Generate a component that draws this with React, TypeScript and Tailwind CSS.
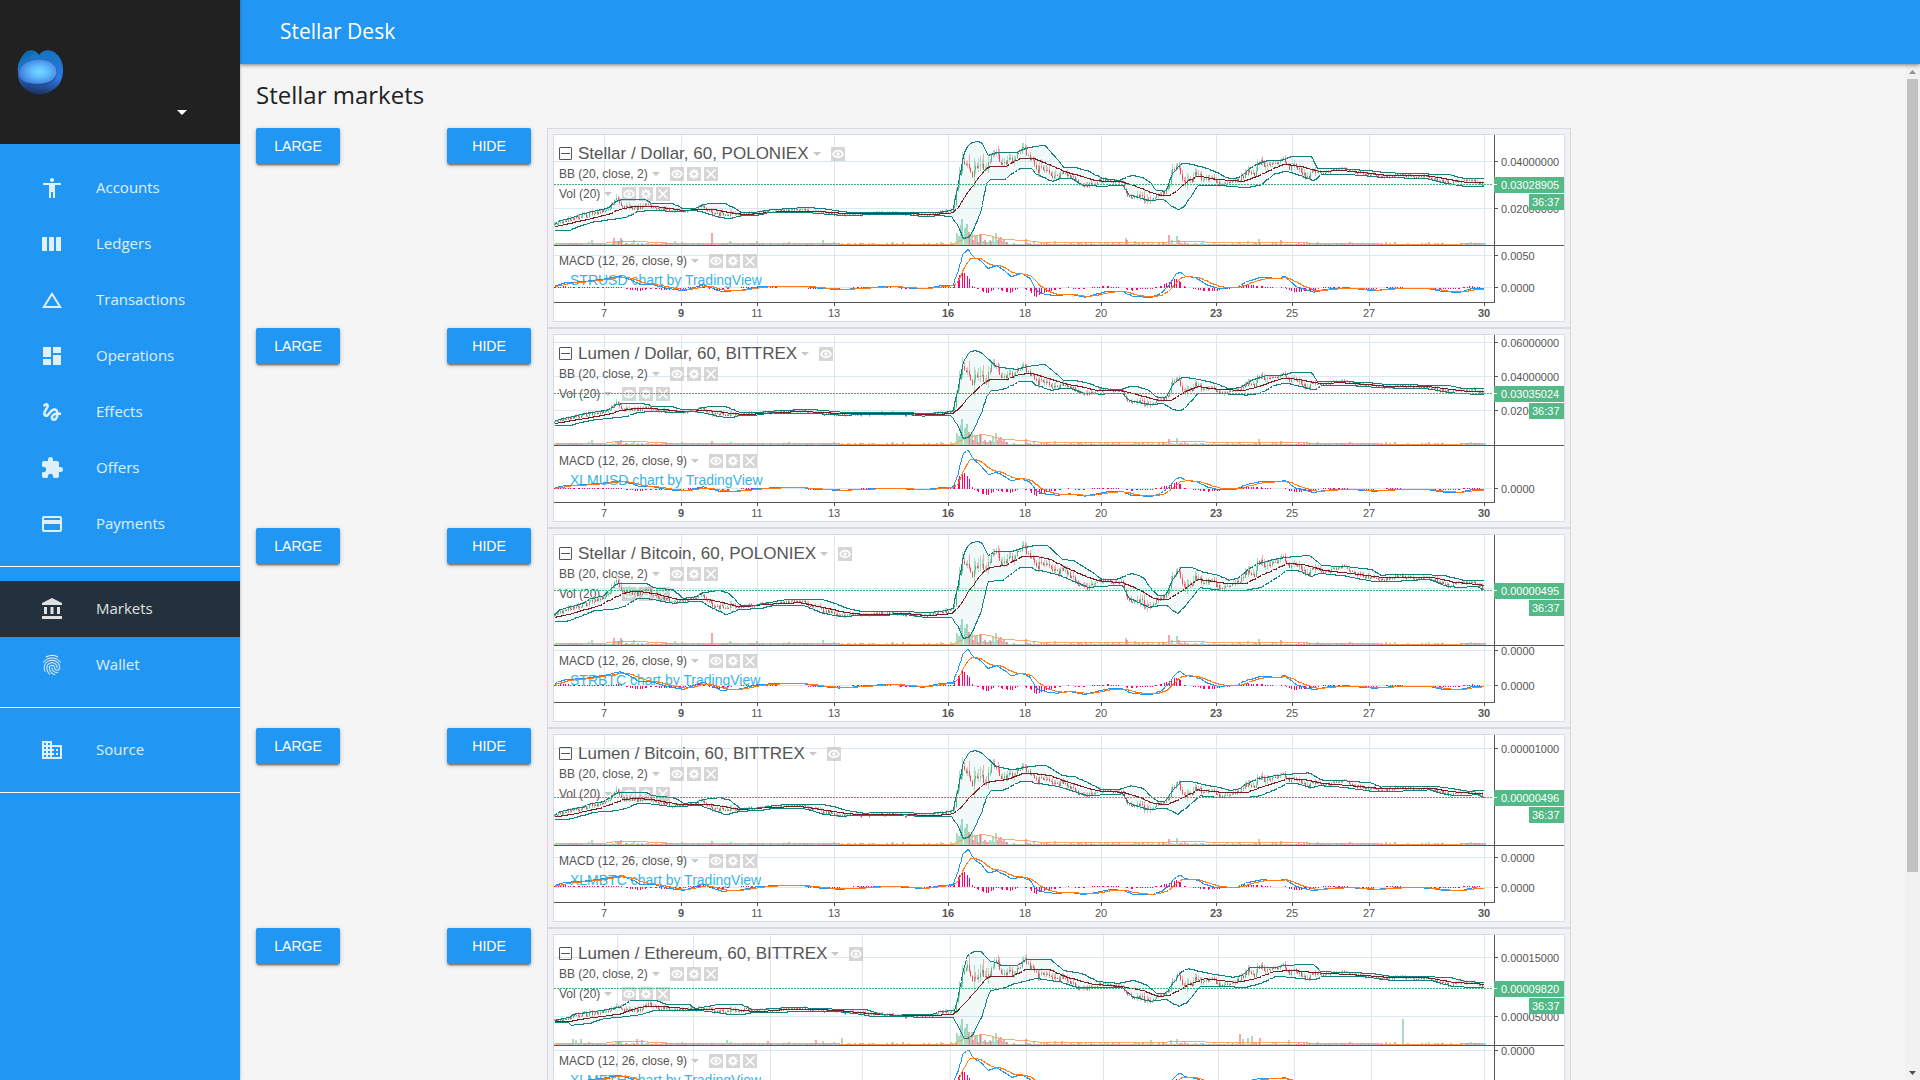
import React from "react";
import {
  MdAccessibility,
  MdAccountBalance,
  MdArrowDropDown,
  MdBusiness,
  MdChangeHistory,
  MdDashboard,
  MdExtension,
  MdFingerprint,
  MdGesture,
  MdPayment,
} from "react-icons/md";

type Pt = [number, number];

/* ---------- chart data, in thirds of a pixel ---------- */

const RECENT_START = 1500;
const RECENT_SCALE = 1.0332;

const join = (early: Pt[], recent: Pt[]): Pt[] => [
  ...early,
  ...recent.map(([x, y]): Pt => [RECENT_START + x * RECENT_SCALE, y]),
];

const at = (pts: Pt[], x: number): number => {
  if (x <= pts[0][0]) return pts[0][1];
  for (let i = 1; i < pts.length; i++) {
    if (x <= pts[i][0]) {
      const [x0, y0] = pts[i - 1];
      const [x1, y1] = pts[i];
      return x1 === x0 ? y1 : y0 + ((y1 - y0) * (x - x0)) / (x1 - x0);
    }
  }
  return pts[pts.length - 1][1];
};

type Bands = { upper: Pt[]; mid: Pt[]; lower: Pt[] };

const usd: Bands = {
  upper: join(
    [[42, 312], [60, 303], [95, 293], [130, 281], [155, 275], [200, 266], [232, 242], [250, 238], [320, 240], [335, 250], [400, 252], [425, 264], [470, 264], [490, 253], [530, 250], [560, 252], [580, 263], [600, 276], [650, 276], [690, 270], [740, 266], [800, 262], [850, 266], [890, 272], [930, 277], [1040, 276], [1100, 276], [1160, 279], [1215, 275], [1240, 268], [1255, 190], [1275, 90], [1290, 70], [1310, 64], [1325, 67], [1345, 107], [1370, 97], [1430, 97], [1450, 88], [1480, 80], [1510, 76]],
    [[15, 77], [35, 100], [70, 143], [100, 142], [140, 153], [180, 175], [230, 182], [265, 166], [290, 170], [320, 186], [335, 210], [365, 214], [385, 160], [410, 131], [430, 131], [480, 143], [520, 160], [550, 177], [580, 172], [610, 145], [630, 133], [660, 122], [700, 122], [730, 110], [790, 110], [805, 145], [870, 146], [960, 152], [1000, 158], [1190, 164], [1235, 177], [1291, 175]],
  ),
  mid: join(
    [[42, 321], [100, 308], [170, 292], [215, 280], [240, 268], [290, 258], [350, 260], [400, 267], [430, 272], [490, 267], [530, 270], [570, 278], [620, 284], [680, 278], [750, 273], [820, 273], [870, 277], [920, 281], [1000, 280], [1100, 279], [1160, 284], [1220, 281], [1240, 278], [1260, 255], [1280, 220], [1300, 195], [1330, 155], [1350, 138], [1400, 138], [1440, 116], [1480, 114]],
    [[0, 123], [40, 140], [80, 158], [120, 168], [160, 182], [240, 186], [280, 200], [320, 216], [350, 227], [380, 225], [400, 210], [430, 183], [460, 168], [510, 178], [590, 184], [630, 170], [670, 150], [710, 132], [760, 140], [810, 154], [880, 152], [960, 160], [1010, 167], [1130, 168], [1180, 177], [1230, 186], [1291, 188]],
  ),
  lower: join(
    [[42, 330], [90, 331], [120, 318], [160, 306], [225, 297], [260, 292], [290, 276], [330, 271], [400, 274], [470, 272], [500, 280], [540, 292], [570, 297], [600, 288], [650, 286], [690, 277], [820, 279], [900, 286], [1040, 284], [1100, 283], [1150, 290], [1200, 287], [1235, 290], [1255, 320], [1270, 356], [1290, 350], [1320, 285], [1340, 190], [1352, 178], [1390, 180], [1440, 146], [1475, 146], [1490, 163]],
    [[0, 167], [35, 184], [60, 175], [90, 175], [125, 195], [180, 199], [240, 195], [260, 225], [315, 242], [360, 238], [380, 258], [403, 269], [420, 258], [460, 195], [530, 197], [600, 203], [640, 195], [680, 163], [715, 153], [760, 168], [795, 182], [820, 162], [880, 162], [950, 168], [1000, 173], [1120, 175], [1170, 188], [1225, 198], [1291, 199]],
  ),
};

const btc: Bands = {
  upper: join(
    [[42, 285], [60, 270], [100, 258], [130, 250], [150, 237], [190, 228], [232, 190], [320, 190], [340, 203], [400, 210], [430, 235], [470, 230], [490, 218], [540, 211], [570, 222], [600, 255], [650, 255], [690, 247], [740, 239], [850, 239], [880, 248], [920, 265], [970, 276], [1100, 274], [1160, 279], [1215, 272], [1240, 265], [1255, 190], [1275, 90], [1290, 70], [1310, 64], [1325, 67], [1345, 107], [1370, 93], [1420, 93], [1450, 84], [1480, 78]],
    [[0, 75], [20, 75], [65, 118], [100, 122], [140, 148], [180, 178], [225, 178], [265, 160], [300, 172], [325, 210], [345, 228], [365, 225], [385, 180], [410, 142], [440, 142], [470, 155], [520, 167], [550, 181], [580, 172], [600, 152], [630, 132], [680, 118], [720, 112], [780, 106], [800, 120], [820, 137], [890, 140], [960, 148], [990, 166], [1040, 162], [1170, 166], [1240, 183], [1291, 182]],
  ),
  mid: join(
    [[42, 293], [100, 280], [180, 256], [250, 220], [290, 213], [350, 222], [420, 240], [500, 238], [550, 248], [600, 261], [680, 253], [780, 248], [850, 262], [920, 278], [980, 284], [1100, 281], [1160, 287], [1220, 283], [1240, 278], [1265, 250], [1285, 215], [1330, 155], [1350, 143], [1400, 135], [1450, 108], [1490, 110]],
    [[0, 112], [30, 118], [80, 145], [140, 172], [180, 184], [240, 188], [290, 210], [330, 236], [370, 240], [410, 215], [460, 178], [540, 190], [600, 190], [640, 168], [720, 130], [770, 135], [830, 152], [900, 160], [1000, 173], [1140, 172], [1200, 186], [1291, 196]],
  ),
  lower: join(
    [[42, 303], [85, 303], [120, 290], [160, 273], [230, 266], [260, 256], [290, 236], [330, 237], [400, 250], [480, 243], [520, 265], [560, 284], [600, 268], [660, 266], [700, 256], [790, 256], [850, 280], [900, 289], [1000, 286], [1100, 284], [1150, 292], [1235, 292], [1255, 322], [1270, 356], [1290, 350], [1320, 285], [1345, 185], [1390, 180], [1440, 143], [1475, 143], [1490, 153]],
    [[0, 152], [50, 163], [100, 185], [140, 202], [240, 195], [260, 235], [315, 262], [365, 255], [400, 281], [425, 255], [465, 203], [520, 210], [600, 210], [640, 203], [690, 172], [715, 152], [750, 152], [790, 170], [810, 160], [880, 167], [960, 183], [1050, 183], [1130, 178], [1180, 198], [1220, 203], [1270, 198], [1291, 213]],
  ),
};

const eth: Bands = {
  upper: join(
    [[42, 302], [60, 298], [90, 292], [100, 283], [180, 272], [240, 262], [275, 241], [350, 241], [375, 252], [450, 254], [465, 266], [510, 258], [540, 252], [600, 252], [640, 270], [690, 266], [760, 262], [900, 268], [980, 270], [1020, 282], [1060, 286], [1180, 282], [1200, 274], [1245, 272], [1260, 200], [1280, 110], [1300, 95], [1325, 95], [1350, 125], [1370, 127], [1385, 138], [1430, 137], [1460, 120]],
    [[0, 118], [30, 118], [70, 152], [120, 160], [170, 185], [230, 190], [270, 181], [310, 195], [340, 222], [365, 220], [390, 185], [410, 155], [430, 146], [490, 160], [560, 172], [590, 165], [610, 142], [680, 143], [710, 136], [795, 133], [815, 155], [960, 160], [1010, 168], [1190, 172], [1240, 185], [1291, 187]],
  ),
  mid: join(
    [[42, 305], [80, 306], [130, 297], [240, 282], [300, 262], [340, 258], [400, 262], [470, 270], [560, 265], [610, 272], [660, 275], [720, 270], [800, 267], [900, 272], [960, 278], [1030, 284], [1150, 288], [1240, 283], [1260, 265], [1285, 238], [1310, 210], [1335, 178], [1350, 170], [1420, 168], [1460, 148]],
    [[0, 148], [30, 150], [80, 172], [150, 192], [240, 200], [300, 212], [345, 230], [380, 225], [430, 195], [480, 176], [570, 187], [620, 178], [680, 155], [730, 151], [800, 158], [920, 165], [1010, 172], [1130, 174], [1200, 187], [1291, 193]],
  ),
  lower: join(
    [[42, 307], [85, 308], [95, 316], [150, 310], [190, 296], [240, 292], [300, 284], [340, 272], [460, 270], [510, 275], [560, 282], [600, 285], [650, 276], [740, 276], [900, 275], [960, 283], [1000, 290], [1240, 292], [1260, 330], [1275, 357], [1295, 350], [1325, 290], [1350, 212], [1390, 205], [1420, 192], [1490, 175]],
    [[0, 177], [60, 186], [110, 203], [240, 204], [270, 230], [320, 244], [365, 238], [405, 260], [430, 245], [465, 198], [600, 202], [640, 190], [690, 168], [795, 180], [820, 170], [940, 170], [1010, 180], [1130, 180], [1200, 200], [1291, 203]],
  ),
};

/* Bittrex quotes follow the same market on a flatter scale, with a smaller spike. */
const flatten = (b: Bands, k: number, c: number): Bands => {
  const scale = (pts: Pt[]) => pts.map(([x, y]): Pt => [x, y * k + c]);
  const spikeUpper: Pt[] = [[1255, 200], [1272, 120], [1288, 97], [1305, 92], [1325, 98], [1345, 118], [1370, 140]];
  const spikeLower: Pt[] = [[1255, 320], [1270, 356], [1290, 350], [1320, 290], [1340, 232], [1352, 212]];
  return {
    upper: [
      ...scale(b.upper.filter(([x]) => x < 1250)),
      ...spikeUpper,
      ...scale(b.upper.filter(([x]) => x > 1380)),
    ],
    mid: scale(b.mid),
    lower: [
      ...scale(b.lower.filter(([x]) => x < 1250)),
      ...spikeLower,
      ...scale(b.lower.filter(([x]) => x > 1380)),
    ],
  };
};

/* Price inside the bands: 1 is the upper band, -1 the lower one. */
const position = join(
  [[42, 0.6], [150, 0.7], [215, 0.9], [232, 1.2], [250, 0.2], [290, -0.4], [320, 0.3], [350, -0.3], [410, -0.8], [470, 0.8], [490, 0.8], [515, -0.9], [560, -0.2], [600, 0], [650, 0.8], [700, 0.2], [780, 0.4], [850, -0.5], [900, -0.8], [1000, 0], [1040, 0.6], [1110, -0.6], [1190, 0.6], [1240, 0.9], [1268, 1.05], [1285, 0.57], [1300, 0.25], [1318, 0.4], [1340, 0], [1360, 1.1], [1385, 0.3], [1420, 0.25], [1450, 1.1], [1480, -0.4], [1490, -0.85]],
  [[0, -0.6], [20, -0.4], [45, -0.9], [70, -0.3], [105, -1], [135, -1.1], [180, 0.2], [235, 0.1], [250, -1.1], [270, -1], [290, -0.7], [315, -1], [350, 0], [365, 0.8], [385, 1], [395, 1.1], [430, -0.1], [455, 0.3], [480, -0.5], [500, 0.1], [520, -0.9], [560, 0], [590, 0.7], [605, 1], [620, 0.2], [635, 1.1], [670, 0.4], [705, 1.2], [725, -0.4], [740, 0], [775, -1], [800, 0], [820, -0.3], [880, 0.9], [920, 0.1], [1000, -0.7], [1040, 0.4], [1100, -0.2], [1160, -0.6], [1190, -1], [1240, 0.9], [1270, 0], [1291, -0.9]],
);

const macdShape = join(
  [[42, 498], [75, 488], [130, 485], [200, 476], [240, 468], [275, 480], [300, 493], [340, 494], [380, 505], [430, 512], [470, 500], [490, 494], [510, 502], [545, 515], [600, 511], [650, 501], [700, 498], [790, 498], [840, 505], [900, 509], [1000, 502], [1050, 499], [1150, 507], [1200, 498], [1240, 495], [1255, 450], [1270, 400], [1285, 388], [1300, 412], [1320, 420], [1345, 446], [1370, 436], [1390, 450], [1415, 470], [1445, 461], [1470, 475], [1490, 512]],
  [[0, 518], [20, 524], [50, 528], [85, 522], [130, 532], [200, 513], [240, 514], [270, 530], [325, 532], [355, 518], [375, 495], [395, 462], [408, 455], [420, 468], [455, 474], [485, 494], [515, 505], [570, 503], [600, 485], [640, 473], [700, 475], [710, 469], [745, 500], [795, 517], [830, 508], [890, 503], [970, 512], [1040, 504], [1130, 506], [1170, 515], [1220, 517], [1255, 505], [1291, 507]],
);

const spikeVolume: Pt[] = [[1250, 35], [1255, 28], [1260, 60], [1266, 78], [1271, 52], [1276, 63], [1283, 40], [1288, 25], [1295, 40], [1303, 28], [1308, 26], [1316, 32], [1322, 30], [1330, 16], [1355, 24], [1365, 37], [1372, 22], [1380, 24], [1390, 15], [1456, 18], [1480, 12]];
const poloniexVolume = [
  ...join([[155, 16], [220, 22], [237, 20], [245, 16], [280, 16], [405, 12], [515, 37], [565, 12], [650, 12], [845, 14]], [[245, 20], [251, 14], [272, 12], [372, 30], [380, 16], [395, 27], [401, 16], [470, 10], [600, 12], [632, 17], [700, 14], [903, 7], [1285, 7]]),
  ...spikeVolume,
];
const bittrexVolume = [
  ...join([[155, 14], [237, 16], [280, 12], [515, 12]], [[372, 17], [395, 20], [540, 10], [632, 17], [700, 11]]),
  ...spikeVolume,
];
const ethVolume = [
  ...join([[95, 18], [105, 16], [120, 18], [285, 18], [300, 15], [555, 15], [680, 12], [825, 16], [845, 12], [903, 21]], [[60, 12], [320, 14], [375, 14], [397, 17], [545, 10], [578, 33], [588, 18], [602, 20], [612, 28], [635, 22], [720, 15], [1053, 78], [1190, 7]]),
  ...spikeVolume,
];
const volumeAverage = join(
  [[42, 372], [190, 370], [230, 364], [300, 365], [350, 367], [400, 370], [800, 370], [850, 369], [900, 372], [1240, 373], [1260, 362], [1290, 350], [1330, 343], [1360, 350], [1390, 358], [1460, 362], [1490, 366]],
  [[0, 367], [240, 369], [340, 367], [370, 366], [410, 363], [480, 366], [620, 367], [720, 366], [800, 370], [1080, 373], [1220, 373], [1230, 370], [1291, 370]],
);

type Market = {
  name: string;
  symbol: string;
  last: string;
  lastY: number;
  bands: Bands;
  volume: Pt[];
  zero: number;
  gain: [number, number, number];
  prices: [number, string][];
  lines: number[];
  days: [number, string][];
  shift: number;
};

const days: [number, string][] = [[50, "7"], [127, "9"], [203, "11"], [280, "13"], [394, "16"], [471, "18"], [547, "20"], [662, "23"], [738, "25"], [815, "27"], [930, "30"]];
const ethDays: [number, string][] = [[63, "7"], [139, "9"], [216, "11"], [308, "14"], [396, "16"], [472, "18"], [549, "20"], [664, "23"], [740, "25"], [817, "27"], [930, "30"]];
const boldDays = ["9", "16", "23", "30"];

const markets: Market[] = [
  {
    name: "Stellar / Dollar, 60, POLONIEX", symbol: "STRUSD", last: "0.03028905", lastY: 49,
    bands: usd, volume: poloniexVolume, zero: 503, gain: [1, 1, 1],
    prices: [[27, "0.04000000"], [74, "0.02000000"], [121, "0.0050"], [153, "0.0000"]], lines: [], days, shift: 0,
  },
  {
    name: "Lumen / Dollar, 60, BITTREX", symbol: "XLMUSD", last: "0.03035024", lastY: 58,
    bands: flatten(usd, 0.723, 78.6), volume: bittrexVolume, zero: 507, gain: [0.7, 1.03, 0.75],
    prices: [[8, "0.06000000"], [42, "0.04000000"], [76, "0.02000000"], [154, "0.0000"]], lines: [], days, shift: 0,
  },
  {
    name: "Stellar / Bitcoin, 60, POLONIEX", symbol: "STRBTC", last: "0.00000495", lastY: 55,
    bands: btc, volume: poloniexVolume, zero: 497, gain: [1.2, 0.95, 0.9],
    prices: [[116, "0.0000"], [151, "0.0000"]], lines: [54], days, shift: 0,
  },
  {
    name: "Lumen / Bitcoin, 60, BITTREX", symbol: "XLMBTC", last: "0.00000496", lastY: 62,
    bands: flatten(btc, 0.709, 83.5), volume: bittrexVolume, zero: 502, gain: [1, 0.99, 0.75],
    prices: [[14, "0.00001000"], [123, "0.0000"], [153, "0.0000"]], lines: [], days, shift: 0,
  },
  {
    name: "Lumen / Ethereum, 60, BITTREX", symbol: "XLMETH", last: "0.00009820", lastY: 53,
    bands: eth, volume: ethVolume, zero: 500, gain: [1, 0.97, 0.85],
    prices: [[23, "0.00015000"], [82, "0.00005000"], [116, "0.0000"], [155, "0.0000"]], lines: [], days: ethDays, shift: 6,
  },
];

/* ---------- drawing ---------- */

const STEP = 4.81;
const FIRST = 42;
const LAST = RECENT_START + 1291 * RECENT_SCALE;
const px = (x: number) => x / 3 - 14;
const py = (y: number) => y / 3 - 15;
const snap = (v: number) => Math.floor(v) + 0.5;

const randomSource = (seed: number) => () => {
  seed = (seed * 1664525 + 1013904223) % 4294967296;
  return seed / 4294967296;
};

const steps: number[] = [];
for (let x = FIRST; x <= LAST; x += STEP) steps.push(x);

const linePath = (f: (x: number) => number) =>
  steps.map((x, i) => `${i ? "L" : "M"}${snap(px(x))} ${snap(py(f(x)))}`).join("");

function buildSeries(m: Market) {
  const rnd = randomSource(17);
  const upper = (x: number) => at(m.bands.upper, x);
  const lower = (x: number) => at(m.bands.lower, x);
  const mid = (x: number) => at(m.bands.mid, x);

  const fill =
    linePath(upper) +
    [...steps].reverse().map((x) => `L${snap(px(x))} ${snap(py(lower(x)))}`).join("") +
    "Z";

  let upBody = "", downBody = "", upWick = "", downWick = "", upVol = "", downVol = "";
  let prev = 0;
  const taken = new Map<number, boolean>();
  m.volume.forEach(([x]) => taken.set(Math.round((x - FIRST) / STEP), true));
  steps.forEach((x, i) => {
    const sx = x - (x < RECENT_START ? m.shift : 0);
    const pos = at(position, sx) * (sx > 1250 && sx < 1350 ? 0.92 : 1);
    const c = mid(x);
    const edge = pos > 0 ? upper(x) : lower(x);
    const width = lower(x) - upper(x);
    const close = c + Math.abs(pos) * (edge - c) + (rnd() - 0.5) * Math.min(26, 6 + width * 0.2);
    const open = i ? prev : close + 3;
    const up = close < open;
    const reach = 2 + rnd() * Math.min(36, width * 0.2);
    const cx = snap(px(x));
    const top = Math.round(py(Math.min(open, close)));
    const bottom = Math.max(Math.round(py(Math.max(open, close))), top + 1);
    const body = `M${cx} ${top}V${bottom}`;
    const wick = `M${cx} ${Math.round(top - reach / 3)}V${Math.round(bottom + (reach * rnd()) / 3)}`;
    if (up) { upBody += body; upWick += wick; } else { downBody += body; downWick += wick; }
    prev = close;

    let h = 1 + rnd() * rnd() * 10;
    if (x > 1290 && x < 1400) h += 8;
    m.volume.forEach(([vx, vh]) => { if (Math.round((vx - FIRST) / STEP) === i) h = Math.max(h, vh); });
    const green = taken.get(i) ? (x > 1245 && x < 1275) || x % 7 > 3 : up;
    const bar = `M${Math.round(px(x))} 110V${Math.round(110 - Math.max(1, h / 3))}h2V110z`;
    if (green) upVol += bar; else downVol += bar;
  });

  const gainAt = (x: number) => {
    const [early, spike, late] = m.gain;
    return at([[1235, early], [1260, spike], [1290, spike], [1350, late]], x);
  };
  const macd = (x: number) => m.zero + (at(macdShape, x) - 503) * gainAt(x);
  const signalValues: number[] = [];
  let s = macd(FIRST) + 2;
  steps.forEach((x) => {
    s += (macd(x) - s) * 0.18;
    signalValues.push(s);
  });
  let histogram = "";
  const zeroY = Math.round(py(m.zero));
  steps.forEach((x, i) => {
    const d = (macd(x) - signalValues[i]) / 3;
    if (Math.abs(d) < 0.3 || (i % 3 === 2 && Math.abs(d) < 40)) return;
    const end = Math.round(zeroY + (d > 0 ? Math.max(1, d) : Math.min(-1, d)));
    histogram += `M${snap(px(x))} ${zeroY}V${end}`;
  });
  const signal = steps.map((x, i) => `${i ? "L" : "M"}${snap(px(x))} ${snap(py(signalValues[i]))}`).join("");

  return {
    fill, upBody, downBody, upWick, downWick, upVol, downVol, histogram, signal,
    upper: linePath(upper), mid: linePath(mid), lower: linePath(lower),
    macd: linePath(macd), average: linePath((x) => at(volumeAverage, x)),
  };
}

function Plot({ market }: { market: Market }) {
  const s = buildSeries(market);
  const { lastY } = market;
  return (
    <svg
      className="pointer-events-none absolute inset-0 h-[186px] w-[1010px] font-['Liberation_Sans',Arial,sans-serif] text-[11px]"
      viewBox="0 0 1010 186"
      fill="none"
      role="img"
      aria-label={`${market.symbol} price chart`}
    >
      <path d={s.upVol} fill="#53b987" fillOpacity="0.5" />
      <path d={s.downVol} fill="#eb4d5c" fillOpacity="0.5" />
      <path d={s.average} stroke="#ff9850" />
      <path d={s.fill} fill="#008080" fillOpacity="0.05" />
      <path d={s.upWick} stroke="#a9dcc3" />
      <path d={s.downWick} stroke="#f5a6ae" />
      <path d={s.upBody} stroke="#53b987" />
      <path d={s.downBody} stroke="#eb4d5c" />
      <g shapeRendering="crispEdges">
        <path d={s.mid} stroke="#7b1f24" />
        <path d={s.upper} stroke="#128080" />
        <path d={s.lower} stroke="#128080" />
      </g>
      <path d={`M0 ${lastY + 0.5}H938`} stroke="#3cb27a" strokeDasharray="2 1" />
      <path d={s.histogram} stroke="#ff006e" />
      <g shapeRendering="crispEdges">
        <path d={s.macd} stroke="#2196f3" />
        <path d={s.signal} stroke="#ff7a1a" />
      </g>

      <path d="M0 110.5H1010M940.5 0V168M0 167.5H941" stroke="#555" />
      {market.prices.map(([y, label]) => (
        <g key={y}>
          <path d={`M941 ${y - 0.5}h3`} stroke="#555" />
          <text x="947" y={y + 4} fill="#555">{label}</text>
        </g>
      ))}
      {market.days.map(([x, label]) => (
        <g key={x}>
          <path d={`M${x + 0.5} 168v3`} stroke="#555" />
          <text x={x} y="182" textAnchor="middle" fill="#555" fontWeight={boldDays.includes(label) ? 700 : 400}>{label}</text>
        </g>
      ))}
      <path d={`M940 ${lastY - 7}h70v16h-70zM975 ${lastY + 10}h35v16h-35z`} fill="#53b987" />
      <path d={`M940 ${lastY + 0.5}h3`} stroke="#fff" />
      <text x="947" y={lastY + 5} fill="#fff">{market.last}</text>
      <text x="978" y={lastY + 22} fill="#fff">36:37</text>
    </svg>
  );
}

function Grid({ market }: { market: Market }) {
  const rows = [...market.prices.map(([y]) => y), ...market.lines];
  return (
    <svg className="absolute inset-0 h-[186px] w-[1010px]" viewBox="0 0 1010 186" aria-hidden="true">
      <path
        d={rows.map((y) => `M0 ${y - 0.5}H938`).join("") + market.days.map(([x]) => `M${x + 0.5} 0V166`).join("")}
        stroke="#dce8ef"
      />
    </svg>
  );
}

const toolButton = "flex size-[14px] items-center justify-center bg-[#c8c8c8]/75 text-white";

function EyeButton() {
  return (
    <button type="button" aria-label="Hide" className={toolButton}>
      <svg width="14" height="14" viewBox="0 0 14 14" fill="none" stroke="currentColor">
        <path d="M2 7C4 2.500 10 2.500 12 7C10 11.500 4 11.500 2 7Z" strokeWidth="1.6" />
        <circle cx="7" cy="7" r="1.8" fill="currentColor" stroke="none" />
      </svg>
    </button>
  );
}

function Tools() {
  return (
    <>
      <EyeButton />
      <button type="button" aria-label="Settings" className={toolButton}>
        <svg width="14" height="14" viewBox="0 0 14 14" fill="none" stroke="currentColor">
          <circle cx="7" cy="7" r="2.8" strokeWidth="2" />
          <path d="M7 2v2M7 10v2M2 7h2M10 7h2M3.500 3.500l1.300 1.300M9.200 9.200l1.300 1.300M3.500 10.500l1.300-1.300M9.200 4.800l1.300-1.300" strokeWidth="1.6" />
        </svg>
      </button>
      <button type="button" aria-label="Remove" className={toolButton}>
        <svg width="14" height="14" viewBox="0 0 14 14" fill="none" stroke="currentColor">
          <path d="M2.500 2.500l9 9M11.500 2.500l-9 9" strokeWidth="1.6" />
        </svg>
      </button>
    </>
  );
}

function Caret() {
  return (
    <svg className="mr-[7px] ml-px h-1 w-2 shrink-0" viewBox="0 0 8 4" aria-hidden="true">
      <path d="M0 0H8L4 4Z" fill="#c8c8c8" />
    </svg>
  );
}

function LegendRow({ label }: { label: string }) {
  return (
    <div className="flex h-5 items-center gap-[3px] text-xs text-[#555]">
      <span>{label}</span>
      <Caret />
      <Tools />
    </div>
  );
}

function Chart({ market }: { market: Market }) {
  return (
    <div className="h-[200px] max-w-[1024px] grow border border-[#d9dade] bg-[#f1f2f7] p-[5px] font-['Liberation_Sans',Arial,sans-serif]">
      <div className="relative h-full overflow-hidden border border-[#d9dade] bg-white">
        <Grid market={market} />
        <div className="relative flex flex-col pt-2 pl-[5px]">
          <div className="flex h-[21px] items-center gap-[3px] text-[17px] text-[#555]">
            <button type="button" aria-label="Collapse" className="mr-[3px] flex size-[13px] items-center justify-center rounded-[1px] border border-[#555]">
              <span className="h-px w-[9px] bg-[#555]" />
            </button>
            <span className="whitespace-nowrap">{market.name}</span>
            <Caret />
            <EyeButton />
          </div>
          <LegendRow label="BB (20, close, 2)" />
          <LegendRow label="Vol (20)" />
          <div className="mt-[47px]">
            <LegendRow label="MACD (12, 26, close, 9)" />
          </div>
          <a href="#tradingview" className="ml-[11px] self-start text-sm leading-[18px] text-[#3bb3e4]">
            {market.symbol} chart by TradingView
          </a>
        </div>
        <Plot market={market} />
      </div>
    </div>
  );
}

/* ---------- shell ---------- */

function ColumnsIcon() {
  return (
    <svg width="24" height="24" viewBox="0 0 24 24" fill="currentColor" aria-hidden="true">
      <rect x="2" y="5" width="5" height="14" rx="0.5" />
      <rect x="9" y="5" width="5" height="14" rx="0.5" />
      <rect x="16" y="5" width="5" height="14" rx="0.5" />
    </svg>
  );
}

const groups = [
  {
    pad: "pt-4 pb-[14px]",
    items: [
      { label: "Accounts", icon: <MdAccessibility size={24} /> },
      { label: "Ledgers", icon: <ColumnsIcon /> },
      { label: "Transactions", icon: <MdChangeHistory size={24} /> },
      { label: "Operations", icon: <MdDashboard size={24} /> },
      { label: "Effects", icon: <MdGesture size={24} /> },
      { label: "Offers", icon: <MdExtension size={24} /> },
      { label: "Payments", icon: <MdPayment size={24} /> },
    ],
  },
  {
    pad: "py-[14px]",
    items: [
      { label: "Markets", icon: <MdAccountBalance size={24} />, active: true },
      { label: "Wallet", icon: <MdFingerprint size={24} /> },
    ],
  },
  { pad: "py-[14px]", items: [{ label: "Source", icon: <MdBusiness size={24} /> }] },
];

function Logo() {
  return (
    <svg width="48" height="48" viewBox="0 0 48 48" aria-label="Stellar Desk logo" role="img">
      <defs>
        <radialGradient id="face" cx="0.55" cy="0.5" r="0.6">
          <stop offset="0" stopColor="#78dcff" />
          <stop offset="0.45" stopColor="#5ab4fb" />
          <stop offset="1" stopColor="#3a6fd0" />
        </radialGradient>
        <linearGradient id="body" x1="0.6" y1="0" x2="0.4" y2="1">
          <stop offset="0" stopColor="#1272c0" />
          <stop offset="0.55" stopColor="#2f7ae6" />
          <stop offset="1" stopColor="#1b2f5c" />
        </linearGradient>
        <linearGradient id="ear" x1="0" y1="0" x2="0.7" y2="1">
          <stop offset="0" stopColor="#0b5596" />
          <stop offset="1" stopColor="#1c92e4" />
        </linearGradient>
      </defs>
      <path d="M23 7C26 3 31 1 36 3C43 6 48 14 47 24C46 33 43 38 37 42C30 47 19 48 12 43C5 39 2 33 2 26C1 18 3 12 8 7C13 1 19 1 23 7Z" fill="url(#body)" />
      <path d="M2 21C3 12 6 7 11 3C16 1 21 3 23 8C21 11 10 13 2 21Z" fill="url(#ear)" />
      <path d="M23 11C12 11 3 17 2.500 25C2.500 30 6 34 14 35.500C28 38 41 34 41 24C41 16 33 11 23 11Z" fill="url(#face)" stroke="#2560b4" strokeWidth="0.8" />
      <path d="M12 35.500C22 38 35 37 40 29" fill="none" stroke="#1b3f86" strokeOpacity="0.6" strokeWidth="1.200" />
    </svg>
  );
}

function Sidebar() {
  return (
    <aside className="z-20 flex w-60 shrink-0 flex-col bg-[#2196f3] shadow-[0_0_3px_rgba(0,0,0,0.3)]">
      <div className="flex h-36 flex-col justify-between bg-[#212121] pt-12">
        <div className="pl-4">
          <Logo />
        </div>
        <button type="button" aria-label="Select account" className="mr-[46px] mb-5 self-end text-white">
          <MdArrowDropDown size={24} />
        </button>
      </div>
      <nav>
        {groups.map((group, i) => (
          <ul key={i} className={`border-b border-white ${group.pad}`}>
            {group.items.map((item) => (
              <li key={item.label}>
                <a
                  href={`#${item.label.toLowerCase()}`}
                  className={`flex h-14 items-center gap-8 pl-10 text-[15px] text-white/85 ${"active" in item ? "bg-[#23303d]" : ""}`}
                >
                  {item.icon}
                  <span className="pb-0.5">{item.label}</span>
                </a>
              </li>
            ))}
          </ul>
        ))}
      </nav>
    </aside>
  );
}

function RaisedButton({ children }: { children: React.ReactNode }) {
  return (
    <button
      type="button"
      className="h-9 w-[84px] rounded-[2px] bg-[#2196f3] font-['Liberation_Sans',Arial,sans-serif] text-sm text-white uppercase shadow-[0_1px_5px_rgba(0,0,0,0.2),0_2px_2px_rgba(0,0,0,0.2),0_3px_1px_-2px_rgba(0,0,0,0.25)]"
    >
      {children}
    </button>
  );
}

export default function App() {
  return (
    <div className="flex h-screen overflow-hidden bg-[#f5f5f5] font-['Open_Sans',sans-serif]">
      <Sidebar />
      <div className="flex min-w-0 grow flex-col">
        <header className="z-10 flex h-16 shrink-0 items-center bg-[#2196f3] pl-10 text-[21px] text-white shadow-[0_1px_4px_rgba(0,0,0,0.5)]">
          Stellar Desk
        </header>
        <div className="flex min-h-0 grow">
          <main className="min-w-0 grow overflow-hidden px-4">
            <h1 className="flex h-16 items-center pb-0.5 text-2xl text-[#212121]">Stellar markets</h1>
            {markets.map((market) => (
              <section key={market.symbol} className="flex items-start gap-4">
                <div className="flex w-[275px] shrink-0 justify-between">
                  <RaisedButton>Large</RaisedButton>
                  <RaisedButton>Hide</RaisedButton>
                </div>
                <Chart market={market} />
              </section>
            ))}
          </main>
          <div className="flex w-[15px] shrink-0 flex-col items-center bg-[#f1f1f1]" aria-hidden="true">
            <svg width="15" height="15" viewBox="0 0 15 15">
              <path d="M4 10H11L7.500 6Z" fill="#8f8f8f" />
            </svg>
            <div className="w-[11px] grow-[793] bg-[#c1c1c1]" />
            <div className="grow-[193]" />
            <svg width="15" height="15" viewBox="0 0 15 15">
              <path d="M4 6H11L7.500 10Z" fill="#505050" />
            </svg>
          </div>
        </div>
      </div>
    </div>
  );
}
